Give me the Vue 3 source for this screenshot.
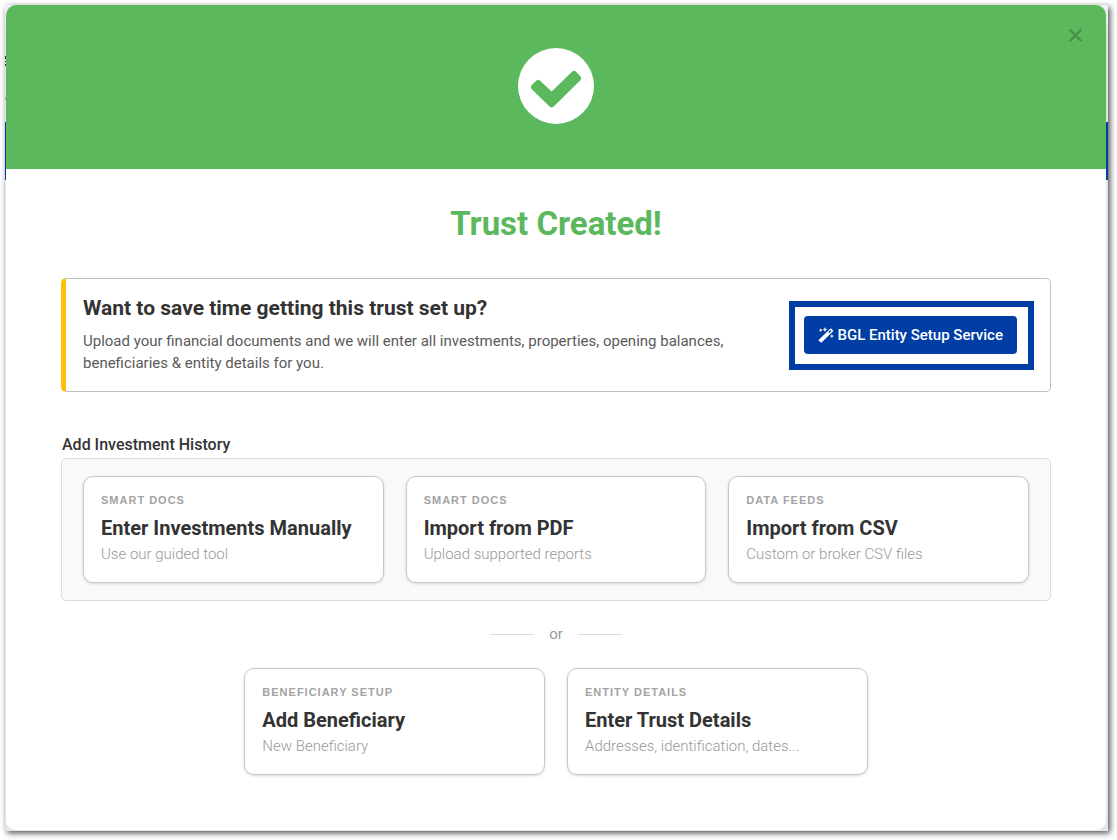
<script setup>
const importOptions = [
  { tag: 'Smart Docs', title: 'Enter Investments Manually', text: 'Use our guided tool' },
  { tag: 'Smart Docs', title: 'Import from PDF', text: 'Upload supported reports' },
  { tag: 'Data Feeds', title: 'Import from CSV', text: 'Custom or broker CSV files' },
]

const setupOptions = [
  { tag: 'Beneficiary Setup', title: 'Add Beneficiary', text: 'New Beneficiary' },
  { tag: 'Entity Details', title: 'Enter Trust Details', text: 'Addresses, identification, dates...' },
]
</script>

<template>
  <div class="page">
    <div class="backdrop">
      <main class="modal" role="dialog" aria-labelledby="modal-title">
        <header class="banner">
          <svg class="check" viewBox="0 0 76 76" aria-hidden="true">
            <circle cx="38" cy="38" r="38" fill="#fff" />
            <path
              d="M13.500 37.300 L18.800 32.300 Q20.300 31 21.800 32.400 L33.700 43.500 L54.500 23.300 Q56 22 57.500 23.300 L62.600 28.500 Q63.800 30.300 62.600 32 L35.500 58.700 Q33.700 60.200 31.900 58.700 L13.500 41 Q12 39.200 13.500 37.300 Z"
              fill="#5cb85c"
            />
          </svg>
          <button class="close" type="button" aria-label="Close">
            <svg viewBox="0 0 15 15" aria-hidden="true">
              <path d="M1.500 2.800l12 12M13.500 2.800l-12 12" stroke="#7cc77c" stroke-width="1.500" />
              <path d="M1.500 1.500l12 12M13.500 1.500l-12 12" stroke="#4a934a" stroke-width="2.600" />
            </svg>
          </button>
        </header>

        <div class="body">
          <h1 id="modal-title">Trust Created!</h1>

          <section class="callout">
            <div class="callout-text">
              <h2>Want to save time getting this trust set up?</h2>
              <p>
                Upload your financial documents and we will enter all investments, properties, opening balances,
                beneficiaries &amp; entity details for you.
              </p>
            </div>
            <div class="highlight">
              <button class="primary" type="button">
                <svg viewBox="0 0 16 16" aria-hidden="true">
                  <path
                    d="M.8 12.700L12.200 1.700q.6-.5 1.200 0l1.500 1.500q.5.600 0 1.200L3.800 15.200q-.6.500-1.200 0L.8 13.800q-.5-.6 0-1.100z"
                    fill="#fff"
                  />
                  <path d="M10.400 5l1 1 2-2-1-1z" fill="#003da5" />
                  <path
                    d="M2.800 1.200l.6 1.400 1.400.6-1.400.6-.6 1.400-.6-1.400-1.400-.6 1.400-.6zM6.900 0l.8 1.900 1.900.7-1.900.7-.8 1.900-.7-1.900-1.900-.7 1.900-.7zM13.900 7l.6 1.500 1.500.6-1.500.6-.6 1.500-.6-1.500-1.500-.6 1.500-.6z"
                    fill="#fff"
                  />
                </svg>
                BGL Entity Setup Service
              </button>
            </div>
          </section>

          <h3>Add Investment History</h3>
          <section class="group">
            <button v-for="option in importOptions" :key="option.title" class="card" type="button">
              <span class="tag">{{ option.tag }}</span>
              <span class="name">{{ option.title }}</span>
              <span class="text">{{ option.text }}</span>
            </button>
          </section>

          <div class="divider"><span>or</span></div>

          <section class="setup">
            <button v-for="option in setupOptions" :key="option.title" class="card" type="button">
              <span class="tag">{{ option.tag }}</span>
              <span class="name">{{ option.title }}</span>
              <span class="text">{{ option.text }}</span>
            </button>
          </section>
        </div>
      </main>
    </div>
  </div>
</template>

<style>
body {
  background: #fff;
}
</style>

<style scoped>
* {
  box-sizing: border-box;
}

.page {
  padding: 5px 9px 9px 5px;
  font-family: Roboto, "Liberation Sans", sans-serif;
  color: #333;
}

/* The sliver of the underlying page that shows around the dialog. */
.backdrop {
  padding: 0 2px 1px 1px;
  background:
    linear-gradient(#333 3px, #e5e5e5 3px, #e5e5e5 5px, #333 5px, #333 6px, #e5e5e5 6px, #e5e5e5 8px, #333 8px) 0 51px / 1px 10px no-repeat,
    linear-gradient(#aaa, #aaa) 0 92px / 1px 3px no-repeat,
    linear-gradient(#eef0f4 20px, #e5e5e5 20px, #e5e5e5 117px, #003da5 117px, #003da5 175px, #e5e5e5 175px);
  box-shadow: 2px 2px 6px rgba(0, 0, 0, 0.7);
}

.modal {
  overflow: hidden;
  background: #fff;
  border-radius: 10px;
}

.banner {
  position: relative;
  display: flex;
  justify-content: center;
  padding: 43px 0 45px;
  background: #5cb85c;
}

.check {
  width: 76px;
  height: 76px;
}

.close {
  position: absolute;
  top: 20px;
  right: 20px;
  display: flex;
  padding: 3px;
  border: 0;
  background: none;
}

.close svg {
  width: 15px;
  height: 15px;
}

.body {
  padding: 35px 55px 55px;
}

h1,
h2,
h3,
p {
  margin: 0;
}

h1 {
  font-size: 33px;
  line-height: 40px;
  font-weight: 700;
  text-align: center;
  color: #5cb85c;
}

.callout {
  display: flex;
  align-items: center;
  justify-content: space-between;
  gap: 24px;
  margin-top: 34px;
  padding: 17px 16px 17px 17px;
  border: 1px solid #bfbfbf;
  border-left: 5px solid #ffc107;
  border-radius: 5px;
}

.callout-text {
  flex: 1;
}

h2 {
  font-size: 21px;
  line-height: 24px;
  font-weight: 700;
}

.callout p {
  margin-top: 10px;
  font-size: 15px;
  line-height: 22px;
  color: #5a5a5a;
}

.highlight {
  padding: 9px 11px 10px 9px;
  border: 6px solid #003da5;
}

.primary {
  display: flex;
  align-items: center;
  gap: 3px;
  padding: 0 14px;
  border: 0;
  border-radius: 4px;
  background: #003da5;
  color: #fff;
  font: 500 15px/38px Roboto, "Liberation Sans", sans-serif;
  white-space: nowrap;
}

.primary svg {
  width: 16px;
  height: 16px;
}

h3 {
  margin-top: 40px;
  padding-left: 1px;
  font-size: 16px;
  line-height: 26px;
  font-weight: 500;
}

.group {
  display: grid;
  grid-template-columns: repeat(3, 1fr);
  gap: 22px;
  padding: 17px 21px;
  border: 1px solid #dcdcdc;
  border-radius: 5px;
  background: #f8f9fb;
}

.card {
  display: flex;
  flex-direction: column;
  align-items: flex-start;
  padding: 13px 16px 16px 17px;
  border: 1px solid #c8c8c8;
  border-radius: 10px;
  background: #fff;
  box-shadow: 0 1px 3px rgba(0, 0, 0, 0.15);
  font-family: inherit;
  text-align: left;
}

.tag {
  font-family: "Liberation Sans", Arial, sans-serif;
  font-size: 11px;
  line-height: 20px;
  font-weight: 700;
  letter-spacing: 1px;
  text-transform: uppercase;
  color: #a3a3a3;
}

.name {
  margin-top: 4px;
  font-size: 20px;
  line-height: 28px;
  font-weight: 700;
  color: #333;
}

.text {
  font-size: 15px;
  line-height: 24px;
  font-weight: 300;
  color: #999;
}

.divider {
  display: flex;
  align-items: center;
  justify-content: center;
  gap: 15px;
  margin-top: 22px;
  font-size: 15px;
  line-height: 22px;
  color: #999;
}

.divider::before,
.divider::after {
  content: "";
  width: 44px;
  height: 1px;
  background: #dcdcdc;
}

.setup {
  display: flex;
  justify-content: center;
  gap: 22px;
  margin-top: 23px;
}

.setup .card {
  width: calc((100% - 88px) / 3);
}
</style>
